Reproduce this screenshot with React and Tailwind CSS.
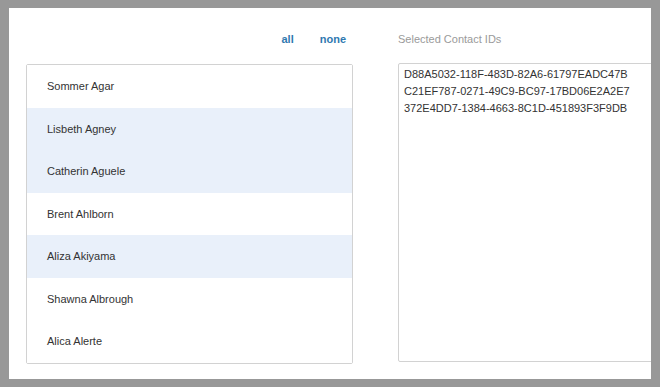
import React from 'react';

// Contact picker: names on the left, chosen ids in a textarea on the right.
const contacts = [
  { name: 'Sommer Agar', selected: false },
  { name: 'Lisbeth Agney', selected: true },
  { name: 'Catherin Aguele', selected: true },
  { name: 'Brent Ahlborn', selected: false },
  { name: 'Aliza Akiyama', selected: true },
  { name: 'Shawna Albrough', selected: false },
  { name: 'Alica Alerte', selected: false },
];

const selectedIds = [
  'D88A5032-118F-483D-82A6-61797EADC47B',
  'C21EF787-0271-49C9-BC97-17BD06E2A2E7',
  '372E4DD7-1384-4663-8C1D-451893F3F9DB',
];

export default function App() {
  return (
    <div
      className="w-[660px] h-[387px] bg-[#989898] pt-[8px] pb-[8px] pl-[9px] pr-[9px] flex"
      style={{ fontFamily: '"Liberation Sans", Arial, sans-serif' }}
    >
      <div className="flex-1 bg-white overflow-hidden pl-[17px] pt-[23px]">
        <div className="flex gap-[45px] w-[700px]">
          {/* left column */}
          <div className="w-[327px] shrink-0 flex flex-col">
            <div className="h-[33px] flex items-start justify-end gap-[26px] pr-[7px] text-[11px] font-bold text-[#2f79b0]">
              <button className="leading-[17px]">all</button>
              <button className="leading-[17px]">none</button>
            </div>
            <ul className="border border-[#d2d2d2] rounded-[2px]">
              {contacts.map((c) => (
                <li
                  key={c.name}
                  className={`h-[42.5px] flex items-center pl-[20px] text-[11px] text-[#333] ${
                    c.selected ? 'bg-[#e9f0fa]' : 'bg-white'
                  }`}
                >
                  {c.name}
                </li>
              ))}
            </ul>
          </div>

          {/* right column */}
          <div className="flex-1 flex flex-col">
            <div className="h-[32px] text-[11px] leading-[17px] text-[#9a9a9a]">Selected Contact IDs</div>
            <textarea
              readOnly
              className="h-[299px] w-full border border-[#d2d2d2] rounded-[2px] px-[5px] pt-[2px] text-[11px] leading-[17px] text-[#333] resize-none outline-none"
              value={selectedIds.join('\n')}
            />
          </div>
        </div>
      </div>
    </div>
  );
}
